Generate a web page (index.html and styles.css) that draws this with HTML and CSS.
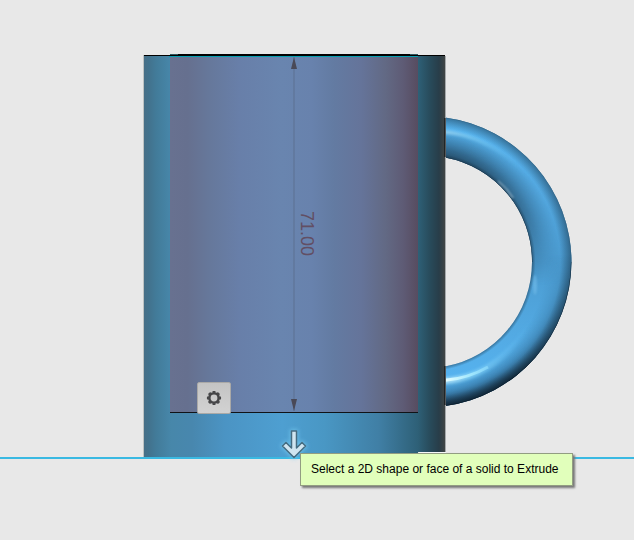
FILE: index.html
```html
<!DOCTYPE html>
<html lang="en">
<head>
<meta charset="utf-8">
<title>Extrude</title>
<link rel="stylesheet" href="styles.css">
</head>
<body>
<main class="viewport">
  <svg class="scene" role="img" aria-label="Mug with a 71.00 extrusion height">
    <defs>
      <linearGradient id="body" gradientUnits="userSpaceOnUse" x1="144" y1="0" x2="445" y2="0">
        <stop offset="0" stop-color="#476f87"/><stop offset=".016" stop-color="#42728d"/>
        <stop offset=".04" stop-color="#427b99"/><stop offset=".09" stop-color="#4787aa"/>
        <stop offset=".16" stop-color="#4887ae"/><stop offset=".27" stop-color="#4b94c4"/>
        <stop offset=".46" stop-color="#4e9fd1"/><stop offset=".6" stop-color="#4997c4"/>
        <stop offset=".78" stop-color="#407fa5"/><stop offset=".91" stop-color="#2e6077"/>
        <stop offset=".95" stop-color="#284b5b"/><stop offset=".98" stop-color="#283d49"/>
        <stop offset="1" stop-color="#404544"/>
      </linearGradient>
      <linearGradient id="face" gradientUnits="userSpaceOnUse" x1="170" y1="0" x2="418" y2="0">
        <stop offset="0" stop-color="#687190"/><stop offset=".07" stop-color="#66708f"/>
        <stop offset=".16" stop-color="#66789b"/><stop offset=".28" stop-color="#687fa9"/>
        <stop offset=".45" stop-color="#6985af"/><stop offset=".57" stop-color="#6882ad"/>
        <stop offset=".66" stop-color="#637ba2"/><stop offset=".77" stop-color="#65749a"/>
        <stop offset=".87" stop-color="#626984"/><stop offset=".94" stop-color="#5e5b75"/>
        <stop offset="1" stop-color="#574c60"/>
      </linearGradient>
      <linearGradient id="tube" gradientUnits="userSpaceOnUse" x1="0" y1="116" x2="0" y2="408">
        <stop offset="0" stop-color="#5abbf8"/><stop offset=".25" stop-color="#55abe4"/>
        <stop offset=".5" stop-color="#4b9bd0"/><stop offset=".75" stop-color="#53aae3"/>
        <stop offset="1" stop-color="#58b8f7"/>
      </linearGradient>
      <radialGradient id="inner-shade" gradientUnits="userSpaceOnUse" cx="426" cy="262" r="146">
        <stop offset=".725" stop-color="#152c3e" stop-opacity=".9"/>
        <stop offset=".78" stop-color="#1e415b" stop-opacity=".75"/>
        <stop offset=".85" stop-color="#2d6287" stop-opacity=".5"/>
        <stop offset=".93" stop-color="#37749e" stop-opacity="0"/>
      </radialGradient>
      <radialGradient id="outer-shade" gradientUnits="userSpaceOnUse" cx="426" cy="262" r="146">
        <stop offset=".82" stop-color="#35749e" stop-opacity="0"/>
        <stop offset=".9" stop-color="#2b628a" stop-opacity=".55"/>
        <stop offset=".96" stop-color="#173247" stop-opacity=".85"/>
        <stop offset="1" stop-color="#061019"/>
      </radialGradient>
      <radialGradient id="rim-shade" gradientUnits="userSpaceOnUse" cx="426" cy="262" r="146">
        <stop offset=".725" stop-color="#17354b" stop-opacity=".5"/>
        <stop offset=".75" stop-color="#17354b" stop-opacity="0"/>
        <stop offset=".92" stop-color="#17354b" stop-opacity="0"/>
        <stop offset="1" stop-color="#17354b" stop-opacity=".55"/>
      </radialGradient>
      <linearGradient id="fade-down" gradientUnits="userSpaceOnUse" x1="0" y1="130" x2="0" y2="285">
        <stop offset="0" stop-color="#fff"/><stop offset=".55" stop-color="#888"/><stop offset="1" stop-color="#000"/>
      </linearGradient>
      <linearGradient id="fade-up" gradientUnits="userSpaceOnUse" x1="0" y1="255" x2="0" y2="380">
        <stop offset="0" stop-color="#000"/><stop offset="1" stop-color="#fff"/>
      </linearGradient>
      <linearGradient id="shine" gradientUnits="userSpaceOnUse" x1="445" y1="0" x2="530" y2="0">
        <stop offset="0" stop-color="#e8ffff"/><stop offset=".3" stop-color="#a8ecff" stop-opacity=".85"/>
        <stop offset="1" stop-color="#67c6ff" stop-opacity="0"/>
      </linearGradient>
      <mask id="upper"><rect x="440" y="110" width="140" height="180" fill="url(#fade-down)"/></mask>
      <mask id="lower"><rect x="440" y="250" width="140" height="160" fill="url(#fade-up)"/></mask>
      <clipPath id="handle-clip"><path d="M445 117.500A146 146 0 0 1 571.500 262A146 146 0 0 1 445 406V366.500A106 106 0 0 0 532 262A106 106 0 0 0 445 157.500Z"/></clipPath>
      <filter id="soft" x="-20%" y="-20%" width="140%" height="140%"><feGaussianBlur stdDeviation="1.5"/></filter>
      <filter id="soft-spot" x="-100%" y="-50%" width="300%" height="200%"><feGaussianBlur stdDeviation="1"/></filter>
      <filter id="halo" x="-50%" y="-50%" width="200%" height="200%"><feGaussianBlur stdDeviation="2"/></filter>
    </defs>
    <svg x="50%" y="50%" overflow="visible">
      <g transform="translate(-317 -270)">
        <g clip-path="url(#handle-clip)">
          <rect x="445" y="110" width="130" height="300" fill="url(#tube)"/>
          <g mask="url(#upper)"><rect x="445" y="110" width="130" height="180" fill="url(#inner-shade)"/></g>
          <g mask="url(#lower)"><rect x="445" y="250" width="130" height="160" fill="url(#outer-shade)"/></g>
          <rect x="445" y="110" width="130" height="300" fill="url(#rim-shade)"/>
          <path d="M443 132Q468 133 495 149T536 190" fill="none" stroke="url(#shine)" stroke-width="3" opacity=".5" filter="url(#soft)"/>
          <path d="M443 381Q479 379 506 353T540 300" fill="none" stroke="url(#shine)" stroke-width="6" opacity=".6" filter="url(#soft)"/>
          <path d="M443 380.500Q467 379 488 367" fill="none" stroke="url(#shine)" stroke-width="3"/>
          <path d="M498 181Q507 188 513 198" fill="none" stroke="#d4efff" stroke-width="1" filter="url(#soft-spot)"/>
          <ellipse cx="535" cy="285" rx="2" ry="10" fill="#7fc5ef" opacity=".5" filter="url(#soft-spot)"/>
          <path d="M445 117.500A146 146 0 0 1 571.500 262" fill="none" stroke="#315b77" stroke-opacity=".6"/>
          <path d="M571.500 262A146 146 0 0 1 445 406" fill="none" stroke="#071018" stroke-opacity=".7"/>
          <path d="M445 157.500A106 106 0 0 1 532 262" fill="none" stroke="#152a39" stroke-opacity=".7"/>
        </g>

        <path d="M144 55H445V452H418V457H144Z" fill="url(#body)"/>
        <path d="M143.500 55V457" stroke="#bdc2c2"/>
        <path d="M144 55.500H445" stroke="#000"/>
        <path d="M445.500 56V452" stroke="#a6aaac"/>
        <path d="M445 118V157M445 366V405" stroke="#030608"/>
        <rect x="170" y="56" width="248" height="356" fill="url(#face)"/>
        <path d="M176 55H412" stroke="#000" stroke-width="2"/>
        <path d="M170 54.500H178M410 54.500H418" stroke="#31575d"/>
        <path d="M169 56.500H418" stroke="#079eb0"/>
        <path d="M170 412.500H418" stroke="#101216"/>

        <path d="M294 57V411" stroke="#5d7191"/>
        <path d="M294 57L297 69H291ZM294 411L297 399H291Z" fill="#494957"/>
        <text class="dimension" transform="translate(301 211) rotate(90)">71.00</text>

        <path d="M-4000 458H5000" stroke="#3ab9e2" stroke-width="2"/>
        <path d="M419 452.500H446" stroke="#f7f9fa"/>
        <path d="M291.500 431H296.500V449L302 442.500L305.500 446L294 457.500L282.500 446L286 442.500L291.500 449Z" fill="#76c9ef" stroke="#76c9ef" stroke-width="3" opacity=".8" filter="url(#halo)"/>
        <path d="M291.500 431H296.500V448L302 442.500L305.500 446L294 457.500L282.500 446L286 442.500L291.500 448Z" fill="#d0e5f0" stroke="#456c81" stroke-width="1.500" stroke-linejoin="round"/>
      </g>
    </svg>
  </svg>

  <button class="settings" type="button" aria-label="Extrude settings">
    <svg class="gear" viewBox="0 0 16 16" aria-hidden="true">
      <circle cx="8" cy="8" r="4.700" fill="none" stroke="#464648" stroke-width="2.600"/>
      <circle cx="8" cy="8" r="6.200" fill="none" stroke="#464648" stroke-width="1.800" pathLength="80" stroke-dasharray="6 4" stroke-dashoffset="3"/>
    </svg>
  </button>
  <div class="tooltip" role="tooltip">Select a 2D shape or face of a solid to Extrude</div>
</main>
</body>
</html>
```
FILE: styles.css
```css
* {
  box-sizing: border-box;
}

body {
  margin: 0;
  background: #e8e8e8;
  font-family: "Liberation Sans", Arial, sans-serif;
}

.viewport {
  position: relative;
  min-height: 100vh;
  overflow: hidden;
}

.scene {
  display: block;
  width: 100%;
  height: 100vh;
}

.dimension {
  font-size: 18px;
  fill: #624f64;
}

/* Overlays are anchored to the model, which sits at the viewport centre. */
.settings {
  position: absolute;
  left: calc(50% - 120px);
  top: calc(50% + 112px);
  display: grid;
  place-items: center;
  width: 34px;
  height: 32px;
  padding: 0;
  border: 1px solid #aaa9a7;
  border-radius: 2px;
  background: linear-gradient(#c4c4c4, #d2d2d2);
}

.gear {
  width: 16px;
  height: 16px;
}

.tooltip {
  position: absolute;
  left: calc(50% - 17px);
  top: calc(50% + 183px);
  padding: 0 14px 0 10px;
  border: 1px solid #929d82;
  background: #e1ffbb;
  box-shadow: 2px 2px 2px #777;
  color: #000;
  font-size: 12px;
  line-height: 31px;
  white-space: nowrap;
}
```
